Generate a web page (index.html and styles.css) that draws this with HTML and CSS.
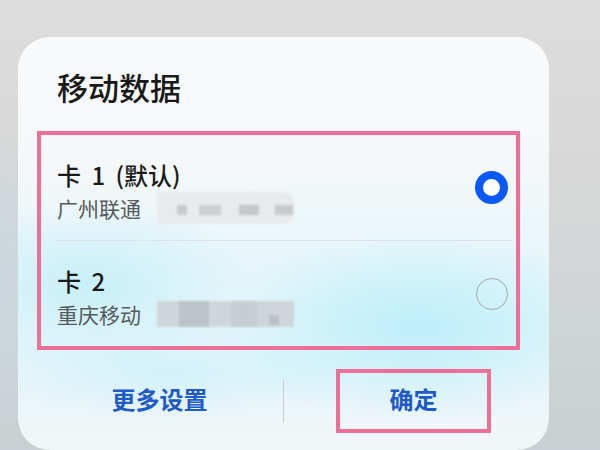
FILE: index.html
```html
<!DOCTYPE html>
<html>
  <head>
    <title>移动数据</title>
    <link rel="stylesheet" href="styles.css">
  </head>
  <body>
    <div class="sheet">
      <h1 class="title">移动数据</h1>

      <div class="sims">
        <div class="sim">
          <div class="sim-info">
            <div class="sim-name">卡 1 (默认)</div>
            <div class="sim-sub">广州联通<span class="mask mask-light"></span></div>
          </div>
          <span class="radio radio-on"></span>
        </div>
        <div class="sim sim-last">
          <div class="sim-info">
            <div class="sim-name">卡 2</div>
            <div class="sim-sub">重庆移动<span class="mask mask-dark"></span></div>
          </div>
          <span class="radio"></span>
        </div>
      </div>

      <div class="actions">
        <div class="action">更多设置</div>
        <div class="action-sep"></div>
        <div class="action">
          <span class="action-mark">确定</span>
        </div>
      </div>
    </div>
  </body>
</html>
```

FILE: styles.css
```css
body {
  margin: 0;
  width: 600px;
  height: 450px;
  overflow: hidden;
  font-family: "Noto Sans CJK SC", "Noto Sans", sans-serif;
  background:
    radial-gradient(ellipse 120px 160px at 0px 280px, rgba(202, 216, 222, 0.9), transparent),
    linear-gradient(180deg, #dddddd 0%, #d8d8d8 35%, #d0d5d7 70%, #c9cfd2 100%);
}

.sheet {
  margin: 37px 0 0 18px;
  width: 531px;
  height: 413px;
  box-sizing: border-box;
  padding-top: 30px;
  border-radius: 32px;
  background:
    radial-gradient(ellipse 210px 95px at 400px 290px, rgba(186, 238, 250, 0.95), transparent),
    radial-gradient(ellipse 170px 85px at 70px 250px, rgba(196, 238, 249, 0.85), transparent),
    radial-gradient(ellipse 200px 50px at 150px 335px, rgba(205, 240, 250, 0.8), transparent),
    linear-gradient(180deg, #f8f9fa 0%, #f5f8f9 30%, #e6f6fa 55%, #e8f6fa 80%, #f1f6f8 100%);
}

.title {
  margin: 0;
  padding-left: 39px;
  font-size: 31px;
  line-height: 40px;
  font-weight: 500;
  color: #1a1a1a;
}

.sims {
  margin: 24px 0 0 19px;
  width: 483px;
  height: 219px;
  box-sizing: border-box;
  border: 4px solid #ee6f96;
  padding-left: 16px;
}

.sim {
  display: flex;
  align-items: center;
  justify-content: space-between;
  height: 105px;
  margin-right: 4px;
  padding-right: 4px;
  border-bottom: 1px solid #dce3e6;
}

.sim-last {
  border-bottom: none;
}

.sim-info {
  padding-top: 8px;
}

.sim-name {
  font-size: 24px;
  line-height: 32px;
  font-weight: 500;
  word-spacing: 5px;
  color: #1a1a1a;
}

.sim-sub {
  display: flex;
  align-items: center;
  font-size: 21px;
  line-height: 34px;
  color: #555a5c;
}

.mask {
  display: inline-block;
  width: 137px;
  height: 32px;
  margin-left: 16px;
  border-radius: 0 10px 10px 0;
  filter: blur(1px);
}

.mask-light {
  background:
    linear-gradient(#c6cacc, #c6cacc) 20px 13px / 10px 10px no-repeat,
    linear-gradient(#cdd0d2, #cdd0d2) 42px 13px / 22px 10px no-repeat,
    linear-gradient(#c4c8ca, #c4c8ca) 82px 13px / 20px 10px no-repeat,
    linear-gradient(#c8cbcd, #c8cbcd) 118px 13px / 18px 10px no-repeat,
    linear-gradient(#e8ebed, #e8ebed);
}

.mask-dark {
  height: 26px;
  border-radius: 0;
  background:
    linear-gradient(#bcc4c8, #bcc4c8) 22px 0 / 30px 26px no-repeat,
    linear-gradient(#c6ced1, #c6ced1) 74px 0 / 26px 26px no-repeat,
    linear-gradient(#b9c1c4, #b9c1c4) 112px 14px / 10px 10px no-repeat,
    linear-gradient(#cfd6d9, #cfd6d9);
}

.radio {
  width: 32px;
  height: 32px;
  box-sizing: border-box;
  border: 1.5px solid #a2aaab;
  border-radius: 50%;
}

.radio-on {
  width: 33px;
  height: 33px;
  border: 8px solid #0a59f7;
  background-color: #fff;
}

.actions {
  display: grid;
  grid-template-columns: 1fr 1px 1fr;
  align-items: center;
  margin: 19px 0 0 18px;
  width: 495px;
  height: 64px;
}

.action {
  display: flex;
  justify-content: center;
  align-items: center;
  font-size: 24px;
  font-weight: bold;
  color: #1f5ac6;
}

.action-sep {
  height: 43px;
  background-color: #c9cdcf;
}

.action-mark {
  display: flex;
  justify-content: center;
  align-items: center;
  width: 155px;
  height: 64px;
  box-sizing: border-box;
  margin-left: 12px;
  padding-bottom: 6px;
  border: 4px solid #ee6f96;
}

.action:first-child {
  padding-bottom: 6px;
}
```
